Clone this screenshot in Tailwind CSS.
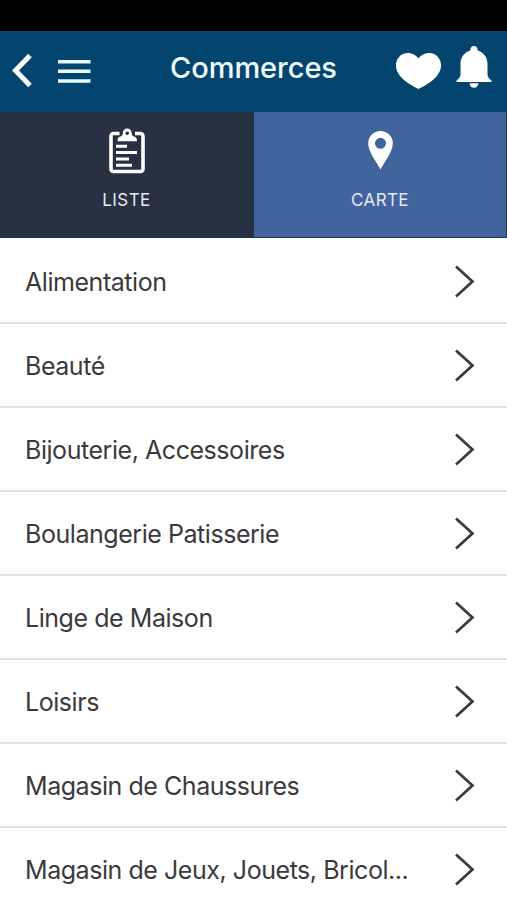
<!DOCTYPE html>
<html lang="fr">
<head>
<meta charset="utf-8">
<title>Commerces</title>
<script src="https://cdn.jsdelivr.net/npm/@tailwindcss/browser@4"></script>
</head>
<body class="flex h-[900px] w-[507px] flex-col overflow-hidden bg-white font-['Inter',sans-serif] text-[#3a3a3c]">
<div class="h-[31px] shrink-0 bg-black"></div>
<header class="flex h-[81px] shrink-0 items-start bg-[#03456e] text-white">
  <svg class="ml-[11px] mt-[22px] h-[35px] w-[22px] shrink-0" viewBox="0 0 22 35" fill="none" stroke="currentColor" stroke-width="5"><path d="M19 2.5 4.5 17.5 19 32.5"/></svg>
  <svg class="ml-[25px] mt-[28px] h-[25px] w-[33px] shrink-0" viewBox="0 0 33 25" fill="#e9fbff"><path d="M0 1h32.5v3.5H0zM0 10.600h32.500v3.500H0zM0 20.200h32.500v3.500H0z"/></svg>
  <h1 class="ml-[79px] mt-[17px] w-[175px] whitespace-nowrap text-[29px] leading-[40px] font-medium tracking-[-0.05px] text-[#effcff]">Commerces</h1>
  <svg class="ml-[51px] mt-[22px] h-[37px] w-[45px] shrink-0" viewBox="0 0 45 37" fill="currentColor"><path d="M22.500 5.500C19.500 1.500 15.500 0 11.500 0 5 0 0 5.500 0 12.500 0 23.500 12.500 31 22.500 36 32.500 31 45 23.500 45 12.500 45 5.500 40 0 33.500 0 29.500 0 25.500 1.500 22.500 5.500Z"/></svg>
  <svg class="ml-[15px] mt-[14px] h-[44px] w-[36px] shrink-0" viewBox="0 0 36 44" fill="currentColor"><path d="M18 1a3.500 3.500 0 0 1 3.500 4.300C27.500 7.500 31.500 12 31.500 19v10c0 3 1.500 4.500 4 6.500v1.500H.5v-1.500c2.500-2 4-3.500 4-6.500V19C4.500 12 8.500 7.500 14.500 5.300A3.500 3.500 0 0 1 18 1ZM13.500 38.200h9c-.5 3-2.200 4.500-4.500 4.500s-4-1.500-4.500-4.500Z"/></svg>
</header>
<nav class="flex h-[126px] shrink-0 border-b border-[#1f3150] bg-[#263142] text-[17px] leading-[24px] text-[#e2e9f5]">
  <div class="flex w-[253px] flex-col items-center">
    <svg class="mt-[16px] h-[46px] w-[36px] text-white" viewBox="0 0 36 46" fill="none" stroke="currentColor"><path d="M10.500 5.500H4.500a2.500 2.500 0 0 0-2.500 2.500v33a2.500 2.500 0 0 0 2.500 2.500h27a2.500 2.500 0 0 0 2.500-2.500V8a2.500 2.500 0 0 0-2.500-2.500h-5.500" stroke-width="3.600"/><path d="M7 18.200h11M7 24.500h21M7 30.900h13M7 37.300h16" stroke-width="3"/><path fill="currentColor" stroke="none" fill-rule="evenodd" d="M18.200.5a4.500 4.500 0 0 1 4.500 4.500c0 2.500 1 3.200 3 3.700 1.700.5 2.300 2 2.300 4.600H8.500c0-2.600.6-4.100 2.300-4.600 2-.5 3-1.200 3-3.700A4.500 4.500 0 0 1 18.200.5ZM18.200 3.500a1.800 1.800 0 1 0 0 3.600 1.800 1.800 0 0 0 0-3.600Z"/></svg>
    <span class="mt-[14px] tracking-[0.4px]">LISTE</span>
  </div>
  <div class="ml-px flex w-[252px] flex-col items-center bg-[#41649d]">
    <svg class="mt-[19px] h-[39px] w-[25px] text-white" viewBox="0 0 25 39" fill="currentColor"><path fill-rule="evenodd" d="M12.500 0A12.300 12.300 0 0 0 .2 12.300C.2 21 8 30 12.500 38.500 17 30 24.800 21 24.800 12.300A12.300 12.300 0 0 0 12.500 0ZM12.500 6.800a5.500 5.500 0 1 0 0 11 5.500 5.500 0 0 0 0-11Z"/></svg>
    <span class="mt-[18px] tracking-[0.4px]">CARTE</span>
  </div>
</nav>
<ul class="mt-[2px] shrink-0 text-[25px] leading-[36px]" id="categories"></ul>
<template id="row">
  <li class="flex h-[84px] items-center justify-between border-b-2 border-[#e1e1e1] pl-[25px] pr-[32px] pt-px">
    <span class="whitespace-nowrap tracking-[-0.45px]"></span>
    <svg class="h-[33px] w-[21px] shrink-0" viewBox="0 0 21 33" fill="none" stroke="currentColor" stroke-width="2.700"><path d="M2 1.500 18.500 16.500 2 31.500"/></svg>
  </li>
</template>
<script>
const categories = ["Alimentation", "Beauté", "Bijouterie, Accessoires", "Boulangerie Patisserie", "Linge de Maison", "Loisirs", "Magasin de Chaussures", "Magasin de Jeux, Jouets, Bricol..."];
const list = document.getElementById("categories");
const template = document.getElementById("row");
for (const name of categories) {
  const row = template.content.cloneNode(true);
  row.querySelector("span").textContent = name;
  list.append(row);
}
</script>
</body>
</html>
